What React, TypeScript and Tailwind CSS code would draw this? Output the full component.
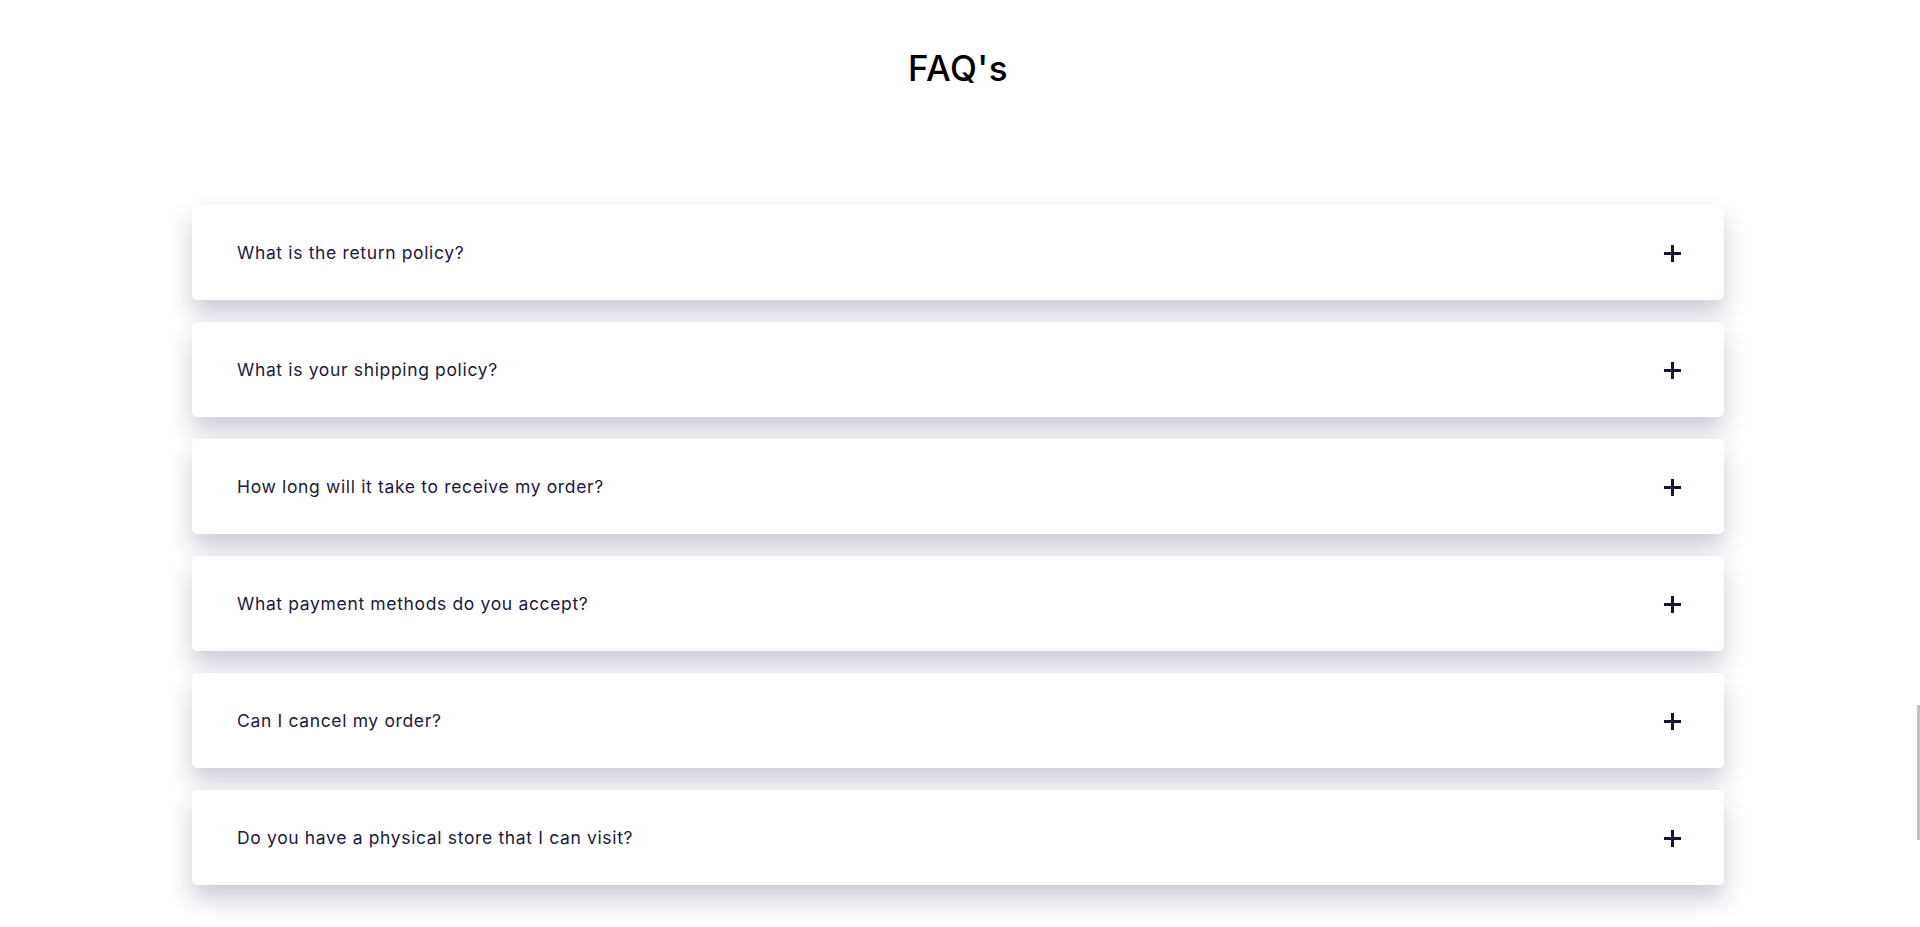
import React from "react";

const faqs = [
  "What is the return policy?",
  "What is your shipping policy?",
  "How long will it take to receive my order?",
  "What payment methods do you accept?",
  "Can I cancel my order?",
  "Do you have a physical store that I can visit?",
];

function Plus() {
  return (
    <svg width="17" height="17" viewBox="0 0 17 17" className="shrink-0">
      <rect x="0" y="7" width="17" height="3" fill="#15153a" />
      <rect x="7" y="0" width="3" height="17" fill="#15153a" />
    </svg>
  );
}

export default function App() {
  return (
    <div
      className="min-h-[927px] w-full bg-white pr-[4px]"
      style={{ fontFamily: "Inter, 'Open Sans', sans-serif" }}
    >
      <h1 className="pt-[46px] text-center text-[35px] font-medium leading-[44px] text-black tracking-[0.5px]">
        FAQ's
      </h1>
      <div className="mx-[192px] mt-[115px] flex flex-col gap-[22px]">
        {faqs.map((q) => (
          <div
            key={q}
            className="flex h-[95px] items-center justify-between rounded-[5px] bg-white pl-[45px] pr-[43px] pt-[2px] shadow-[0_14px_24px_rgba(40,40,90,0.24)]"
          >
            <span className="text-[17.5px] text-[#1a1a3c] tracking-[0.65px]">{q}</span>
            <Plus />
          </div>
        ))}
      </div>
      <div className="fixed right-0 top-[705px] h-[135px] w-[3px] bg-[#c1c1c1]" />
    </div>
  );
}
